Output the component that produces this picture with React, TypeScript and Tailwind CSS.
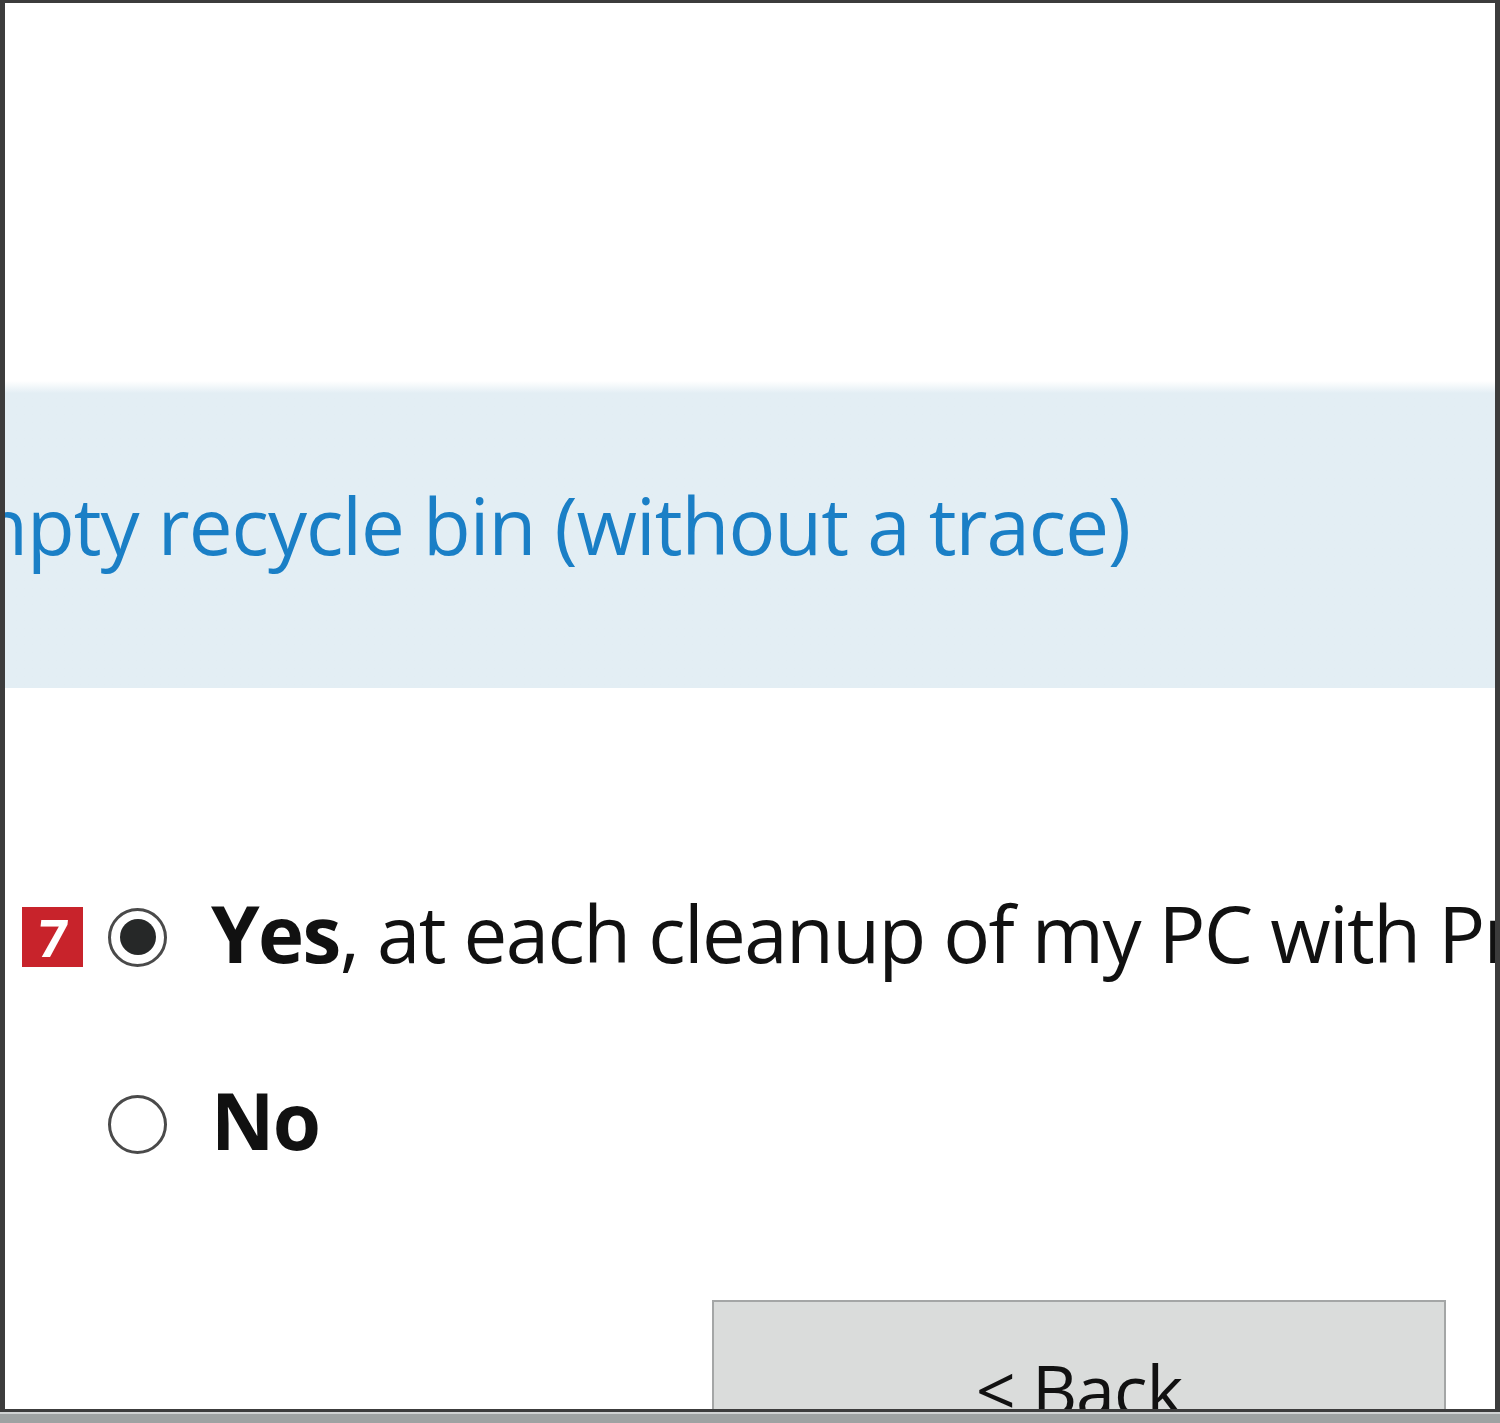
const font = "font-['Open_Sans','Noto_Sans',sans-serif]";

const Radio = ({ checked }: { checked?: boolean }) => (
    <div className="w-[59px] h-[59px] rounded-full border-[3px] border-[#4a4a4a] bg-white flex items-center justify-center shrink-0">
        {checked && <div className="w-[36px] h-[36px] rounded-full bg-[#262828]" />}
    </div>
);

export default function App() {
    return (
        <div className={`w-[1500px] h-[1423px] bg-[#9ea2a2] flex flex-col ${font}`}>
            <div className="h-[1412px] shrink-0 bg-white border-l-[5px] border-r-[5px] border-t-[3px] border-b-[3px] border-[#3c3c3c] overflow-hidden flex flex-col">
                <div className="h-[378px] shrink-0" />

                {/* section header band */}
                <div className="h-[307px] shrink-0 bg-gradient-to-b from-[#ffffff] via-[#e3eef4] via-[4%] to-[#e3eef4] flex items-center justify-end pr-[365px] pb-[20px]">
                    <span className="whitespace-nowrap text-[78px] leading-none text-[#1a7fc6] tracking-[-1px]">
                        Empty recycle bin (without a trace)
                    </span>
                </div>

                <div className="h-[219px] shrink-0" />

                {/* options */}
                <div className="flex flex-col gap-[127px] pl-[17px]">
                    <div className="flex items-center h-[60px]">
                        <div className="w-[61px] h-[60px] bg-[#c8232b] flex items-center justify-center shrink-0">
                            <span className="text-white text-[52px] font-bold leading-none -skew-x-6">7</span>
                        </div>
                        <div className="ml-[25px]">
                            <Radio checked />
                        </div>
                        <span className="ml-[44px] mb-[9px] whitespace-nowrap text-[78px] leading-none text-[#111] tracking-[-1.6px]">
                            <b className="font-bold">Yes</b>, at each cleanup of my PC with PrivaZer
                        </span>
                    </div>
                    <div className="flex items-center h-[60px]">
                        <div className="w-[61px] shrink-0" />
                        <div className="ml-[25px]">
                            <Radio />
                        </div>
                        <span className="ml-[44px] mb-[9px] whitespace-nowrap text-[78px] leading-none font-bold text-[#111] tracking-[-1.6px]">
                            No
                        </span>
                    </div>
                </div>

                <div className="h-[146px] shrink-0" />

                <div className="pl-[707px]">
                    <div className="w-[734px] h-[160px] bg-[#dadcdb] border-2 border-[#a4a6a6] flex justify-center pt-[52px]">
                        <span className="text-[70px] leading-none text-[#111] tracking-[-1px]">&lt; Back</span>
                    </div>
                </div>
            </div>
            <div className="h-[2px] bg-[#cfd1d1]" />
        </div>
    );
}
